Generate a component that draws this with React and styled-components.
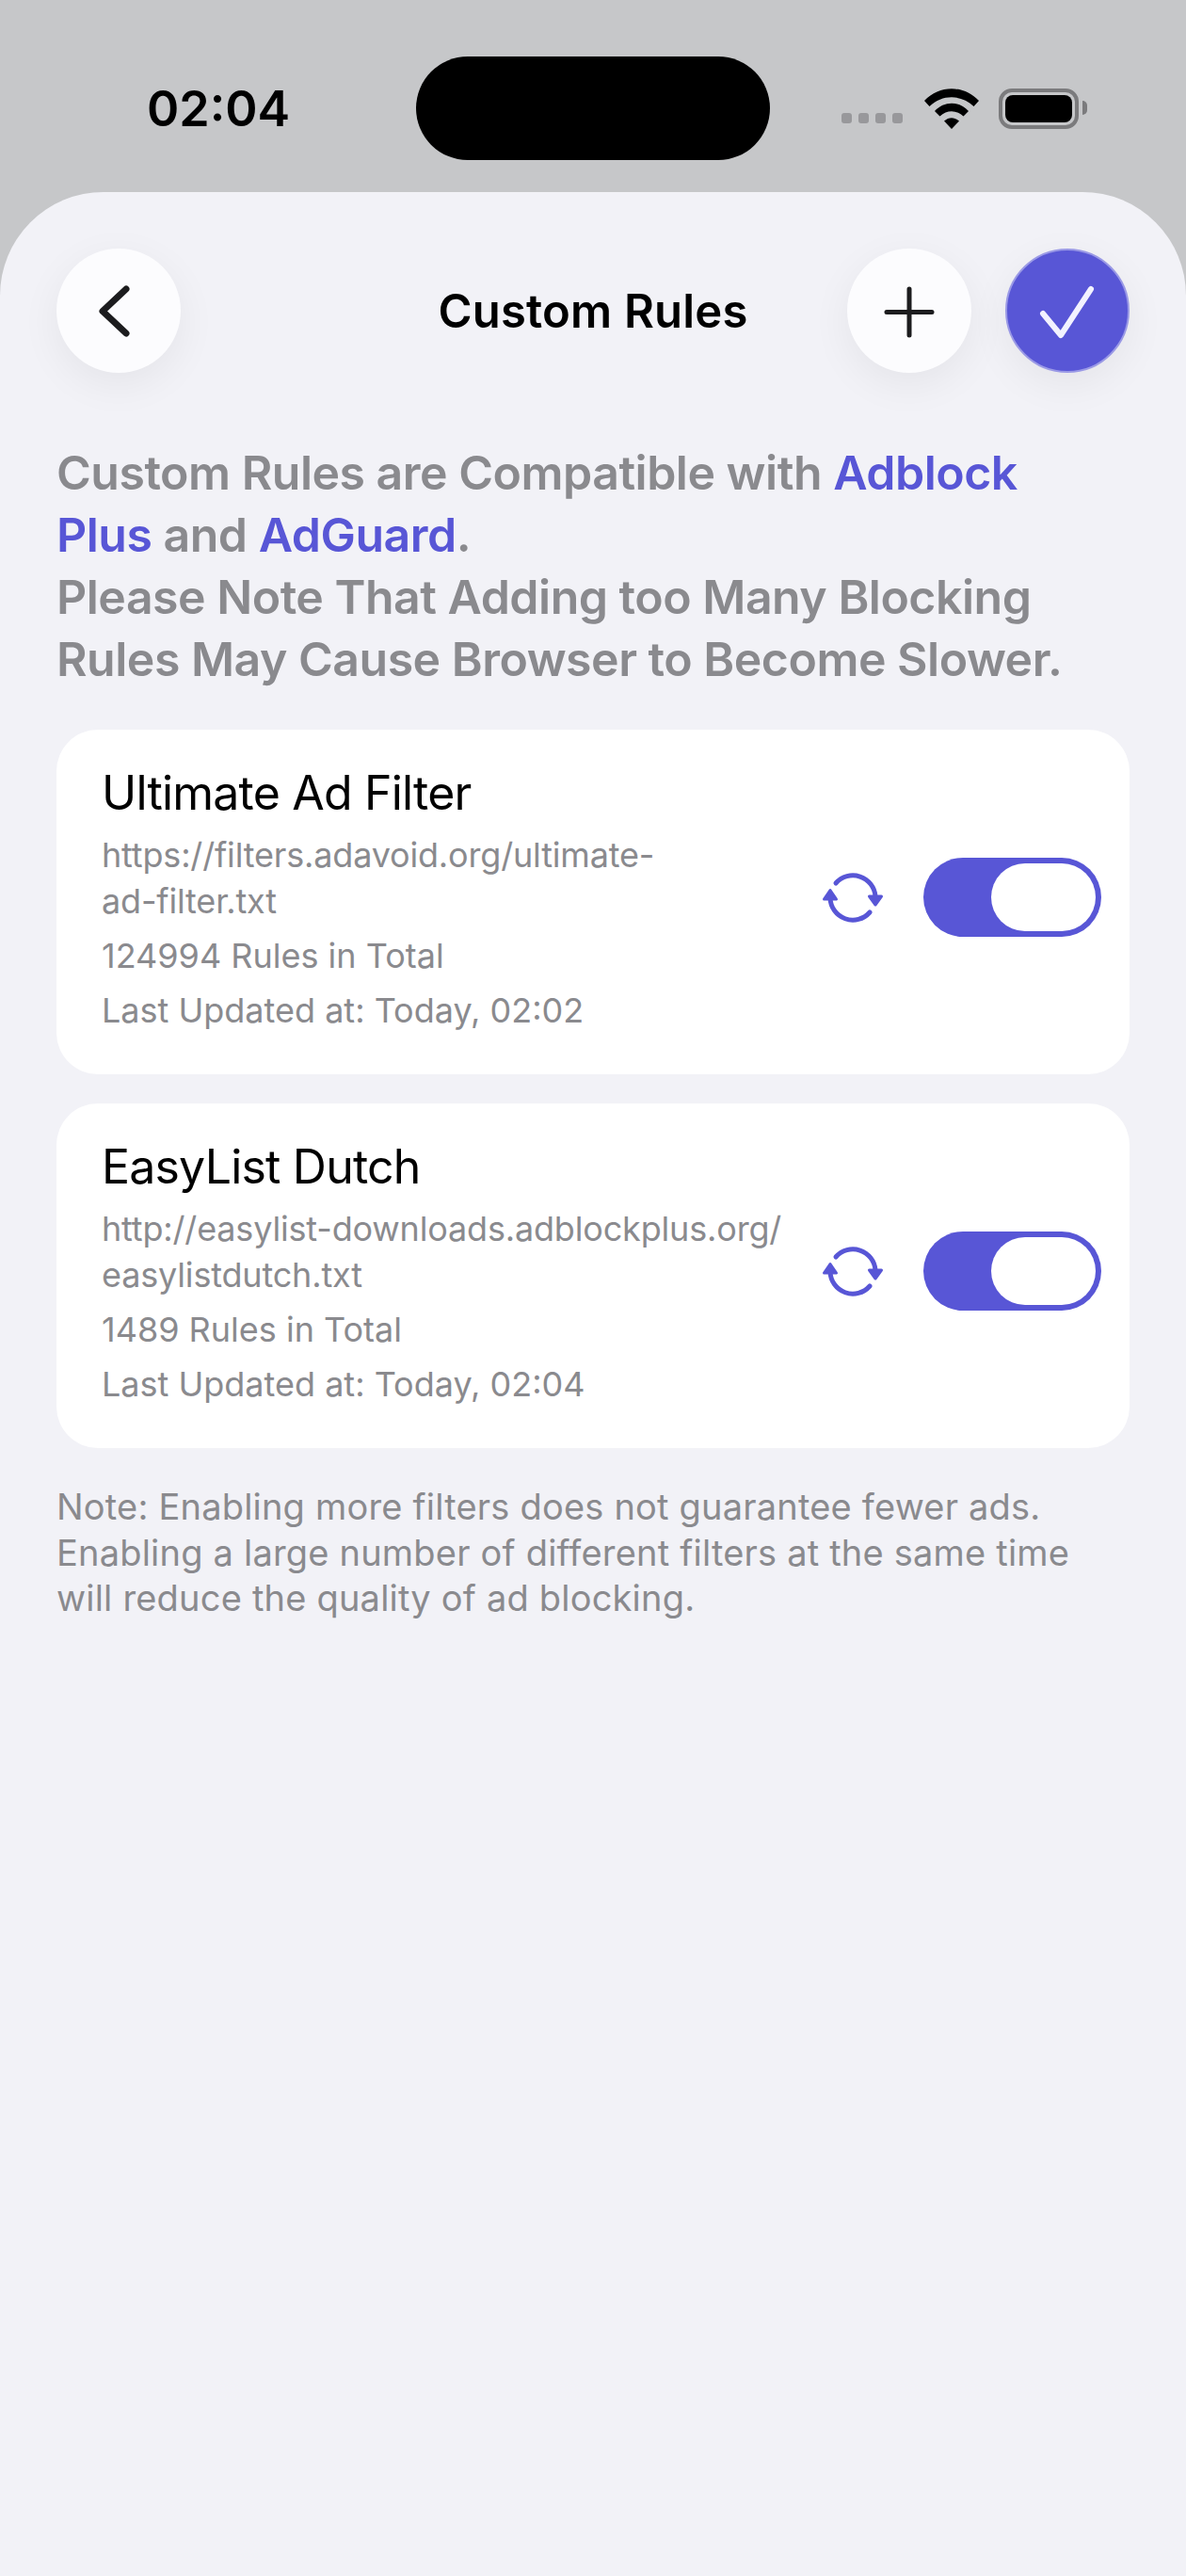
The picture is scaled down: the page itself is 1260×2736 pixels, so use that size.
import React from 'react';
import styled, { createGlobalStyle } from 'styled-components';

const accent = '#5856d6';

const GlobalStyle = createGlobalStyle`
  html, body {
    margin: 0;
    padding: 0;
    background: #c6c7c9;
    font-family: Inter, "Noto Sans", sans-serif;
  }
  * { box-sizing: border-box; }
`;

const Screen = styled.div`
  width: 1260px;
  height: 2736px;
  display: flex;
  flex-direction: column;
  overflow: hidden;
  background: #c6c7c9;
`;

const StatusBar = styled.div`
  height: 204px;
  padding-top: 60px;
  display: grid;
  grid-template-columns: 442px 376px 1fr;
  align-items: start;
`;

const Time = styled.div`
  height: 110px;
  padding-left: 156px;
  display: flex;
  align-items: center;
  font-size: 52px;
  font-weight: 600;
  color: #000;
`;

const Island = styled.div`
  height: 110px;
  border-radius: 55px;
  background: #000;
`;

const StatusIcons = styled.div`
  height: 110px;
  padding-left: 76px;
  display: flex;
  align-items: center;
`;

const Dots = styled.div`
  display: flex;
  gap: 7px;
  margin: 20px 23px 0 0;
`;

const Dot = styled.span`
  width: 11px;
  height: 11px;
  border-radius: 3px;
  background: #98989b;
`;

const Battery = styled.div`
  position: relative;
  width: 85px;
  height: 43px;
  margin-left: 21px;
  padding: 3px;
  border: 4px solid #7b7b7d;
  border-radius: 14px;

  &::before {
    content: '';
    display: block;
    height: 100%;
    border-radius: 8px;
    background: #000;
  }

  &::after {
    content: '';
    position: absolute;
    right: -13px;
    top: 9px;
    width: 5px;
    height: 15px;
    border-radius: 0 8px 8px 0;
    background: #7b7b7d;
  }
`;

const Sheet = styled.div`
  flex: 1;
  padding: 60px 60px 0;
  background: #f2f2f7;
  border-radius: 110px 110px 0 0;
`;

const Header = styled.header`
  display: flex;
  align-items: center;
  margin-bottom: 73px;
`;

const RoundButton = styled.button`
  flex: none;
  width: 132px;
  height: 132px;
  padding: 0;
  display: flex;
  align-items: center;
  justify-content: center;
  border: ${(p) => (p.$primary ? '2px solid #9a99e6' : 'none')};
  border-radius: 50%;
  background: ${(p) => (p.$primary ? accent : '#fcfcfe')};
  box-shadow: 0 12px 44px rgba(0, 0, 0, 0.06);
  margin-left: ${(p) => p.$gap || 0}px;
`;

const Title = styled.h1`
  flex: 1;
  margin: 0;
  padding-left: 168px;
  text-align: center;
  font-size: 49px;
  font-weight: 600;
  letter-spacing: 0.2px;
  color: #000;
`;

const Description = styled.p`
  margin: 0 0 42px;
  font-size: 50px;
  line-height: 66px;
  font-weight: 600;
  letter-spacing: -0.5px;
  color: #8a8a8e;
`;

const Accent = styled.span`
  color: ${accent};
`;

const CardList = styled.div`
  display: flex;
  flex-direction: column;
  gap: 31px;
`;

const Card = styled.section`
  height: 366px;
  padding: 36px 30px 0 48px;
  display: flex;
  align-items: flex-start;
  background: #fff;
  border-radius: 44px;
`;

const Info = styled.div`
  flex: 1;
`;

const CardTitle = styled.div`
  height: 62px;
  margin-bottom: 11px;
  font-size: 50px;
  line-height: 62px;
  letter-spacing: -0.8px;
  color: #000;
`;

const CardLine = styled.div`
  margin-bottom: 9px;
  font-size: 36px;
  line-height: 49px;
  letter-spacing: ${(p) => (p.$url ? '-0.17px' : '0')};
  color: #8a8a8e;
`;

const Actions = styled.div`
  height: 284px;
  display: flex;
  align-items: center;
`;

const Toggle = styled.div`
  width: 189px;
  height: 84px;
  margin-left: 43px;
  padding: 6px;
  display: flex;
  justify-content: flex-end;
  border-radius: 42px;
  background: ${accent};
`;

const Knob = styled.span`
  width: 111px;
  height: 72px;
  border-radius: 36px;
  background: #fff;
`;

const Note = styled.p`
  margin: 38px 0 0;
  font-size: 38px;
  line-height: 48.5px;
  letter-spacing: 0.2px;
  color: #8a8a8e;
`;

const ChevronIcon = () => (
  <svg width="132" height="132" viewBox="0 0 132 132" fill="none">
    <path d="M74 43 L49 66.500 L74 90" stroke="#1c1c1e" strokeWidth="7" strokeLinecap="round" strokeLinejoin="round" />
  </svg>
);

const PlusIcon = () => (
  <svg width="132" height="132" viewBox="0 0 132 132" fill="none">
    <path d="M66 43 V92 M42 67.500 H90" stroke="#1c1c1e" strokeWidth="5" strokeLinecap="round" />
  </svg>
);

const CheckIcon = () => (
  <svg width="128" height="128" viewBox="0 0 128 128" fill="none">
    <path d="M38 67 L57 90 L89 41" stroke="#f2f2ff" strokeWidth="6" strokeLinecap="round" strokeLinejoin="round" />
  </svg>
);

const RefreshIcon = () => (
  <svg width="64" height="54" viewBox="0 0 64 54" fill="none">
    <path d="M14 12 A24 24 0 0 1 56 26" stroke={accent} strokeWidth="5" strokeLinecap="round" />
    <path d="M50 43 A24 24 0 0 1 8 28" stroke={accent} strokeWidth="5" strokeLinecap="round" />
    <path d="M1.500 29 L8 19.500 L14.500 29 Z" fill={accent} stroke={accent} strokeWidth="3" strokeLinejoin="round" />
    <path d="M49.500 26 L62.500 26 L56 35 Z" fill={accent} stroke={accent} strokeWidth="3" strokeLinejoin="round" />
  </svg>
);

const WifiIcon = () => (
  <svg width="58" height="43" viewBox="0 0 58 43" fill="#000">
    <path d="M0 13 C16 -4 42 -4 58 13 L52.500 19 C39 6 19 6 5.500 19 Z" />
    <path d="M11 24 C21 13 37 13 47 24 L41.500 29.500 C34 22.500 24 22.500 16.500 29.500 Z" />
    <path d="M21 34.500 C26 30 32 30 37 34.500 L29 43 Z" />
  </svg>
);

const rules = [
  {
    name: 'Ultimate Ad Filter',
    url: ['https://filters.adavoid.org/ultimate-', 'ad-filter.txt'],
    total: '124994 Rules in Total',
    updated: 'Last Updated at: Today, 02:02',
  },
  {
    name: 'EasyList Dutch',
    url: ['http://easylist-downloads.adblockplus.org/', 'easylistdutch.txt'],
    total: '1489 Rules in Total',
    updated: 'Last Updated at: Today, 02:04',
  },
];

const RuleCard = ({ rule }) => (
  <Card>
    <Info>
      <CardTitle>{rule.name}</CardTitle>
      <CardLine $url>{rule.url[0]}<br />{rule.url[1]}</CardLine>
      <CardLine>{rule.total}</CardLine>
      <CardLine>{rule.updated}</CardLine>
    </Info>
    <Actions>
      <RefreshIcon />
      <Toggle><Knob /></Toggle>
    </Actions>
  </Card>
);

const App = () => (
  <Screen>
    <GlobalStyle />
    <StatusBar>
      <Time>02:04</Time>
      <Island />
      <StatusIcons>
        <Dots><Dot /><Dot /><Dot /><Dot /></Dots>
        <WifiIcon />
        <Battery />
      </StatusIcons>
    </StatusBar>
    <Sheet>
      <Header>
        <RoundButton><ChevronIcon /></RoundButton>
        <Title>Custom Rules</Title>
        <RoundButton><PlusIcon /></RoundButton>
        <RoundButton $primary $gap={36}><CheckIcon /></RoundButton>
      </Header>
      <Description>
        Custom Rules are Compatible with <Accent>Adblock<br />Plus</Accent> and <Accent>AdGuard</Accent>.<br />
        Please Note That Adding too Many Blocking<br />
        Rules May Cause Browser to Become Slower.
      </Description>
      <CardList>
        {rules.map((rule) => <RuleCard key={rule.name} rule={rule} />)}
      </CardList>
      <Note>
        Note: Enabling more filters does not guarantee fewer ads.<br />
        Enabling a large number of different filters at the same time<br />
        will reduce the quality of ad blocking.
      </Note>
    </Sheet>
  </Screen>
);

export default App;
